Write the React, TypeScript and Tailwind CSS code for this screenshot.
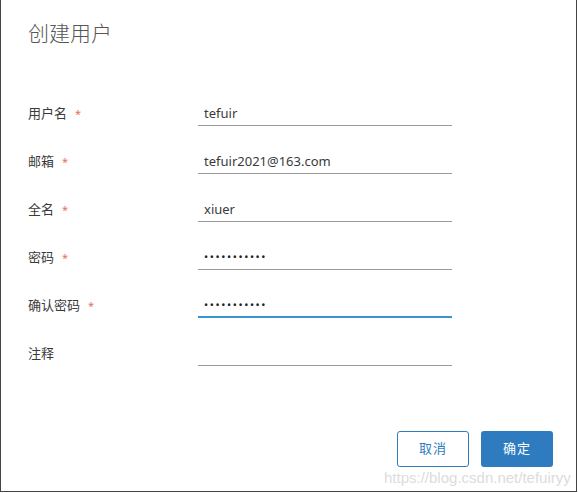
const fields = [
  { label: "用户名", required: true, value: "tefuir" },
  { label: "邮箱", required: true, value: "tefuir2021@163.com" },
  { label: "全名", required: true, value: "xiuer" },
  { label: "密码", required: true, value: "•••••••••••", secret: true },
  { label: "确认密码", required: true, value: "•••••••••••", secret: true, focused: true },
  { label: "注释", required: false, value: "" },
];

export default function App() {
  return (
    <div
      className="relative h-[492px] w-[577px] border-x border-b border-[#444] bg-white"
      style={{ fontFamily: '"Noto Sans", "Noto Sans CJK SC", sans-serif' }}
    >
      <h1 className="pl-[27px] pt-[19px] text-[21px] leading-[28px] font-light text-[#565656]">
        创建用户
      </h1>

      {/* 表单区域 */}
      <div className="mt-[55px] flex flex-col gap-[24px]">
        {fields.map((f) => (
          <div key={f.label} className="flex h-[24px] items-center">
            <div className="flex w-[197px] items-center pl-[27px] text-[13px] text-[#3a3a3a]">
              <span>{f.label}</span>
              {f.required && <span className="ml-[8px] text-[11px] text-[#e2715b]">*</span>}
            </div>
            <div
              className={
                "flex h-[24px] w-[254px] items-center px-[6px] text-[13px] text-[#3a3a3a] " +
                (f.focused ? "border-b-2 border-[#3a93d3]" : "border-b border-[#9a9a9a]")
              }
            >
              {f.secret ? (
                <span className="text-[11px] tracking-[1.6px] text-[#222]">{f.value}</span>
              ) : (
                f.value
              )}
            </div>
          </div>
        ))}
      </div>

      {/* 按钮 */}
      <div className="absolute bottom-[24px] right-[23px] flex gap-[12px]">
        <button className="h-[36px] w-[72px] rounded-[3px] border border-[#2f7cbf] bg-white text-[13px] tracking-[1px] text-[#2f7cbf]">
          取消
        </button>
        <button className="h-[36px] w-[72px] rounded-[3px] bg-[#2e7cbf] text-[13px] tracking-[1px] text-white">
          确定
        </button>
      </div>

      <div
        className="pointer-events-none absolute left-[383px] top-[467px] text-[15px] text-[#dcdcdc]"
        style={{ fontFamily: '"Liberation Sans", Arial, sans-serif' }}
      >
        https://blog.csdn.net/tefuiryy
      </div>
    </div>
  );
}
